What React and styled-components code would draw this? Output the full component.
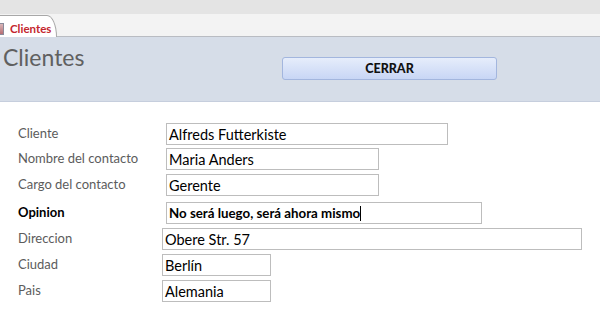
import styled, { createGlobalStyle } from "styled-components";

const GlobalStyle = createGlobalStyle`
  html, body {
    margin: 0;
    padding: 0;
    width: 600px;
    height: 324px;
    overflow: hidden;
    background: #ffffff;
    font-family: "Lato", "Open Sans", sans-serif;
  }
`;

const campos = [
  { id: 1, label: "Cliente", value: "Alfreds Futterkiste", width: 282, top: 21 },
  { id: 2, label: "Nombre del contacto", value: "Maria Anders", width: 213, top: 3 },
  { id: 3, label: "Cargo del contacto", value: "Gerente", width: 213, top: 4 },
  { id: 4, label: "Opinion", value: "No será luego, será ahora mismo", width: 316, top: 6, bold: true },
  { id: 5, label: "Direccion", value: "Obere Str. 57", width: 420, top: 4, indent: true },
  { id: 6, label: "Ciudad", value: "Berlín", width: 109, top: 4, indent: true },
  { id: 7, label: "Pais", value: "Alemania", width: 109, top: 4, indent: true },
];

const App = () => {
  return (
    <Page>
      <GlobalStyle />
      <TopBar />
      <TabStrip>
        <Tab>
          <TabIcon />
          <TabText>Clientes</TabText>
        </Tab>
      </TabStrip>

      <Header>
        <Title>Clientes</Title>
        <Button>CERRAR</Button>
      </Header>

      <Form>
        {campos.map((c) => (
          <Row key={c.id} $top={c.top}>
            <Label $bold={c.bold}>{c.label}</Label>
            <Field $width={c.width} $indent={c.indent} $bold={c.bold}>
              {c.value}
              {c.bold && <Caret />}
            </Field>
          </Row>
        ))}
      </Form>
    </Page>
  );
};

export default App;

// styled-components
const Page = styled.div`
  width: 600px;
  height: 324px;
  display: flex;
  flex-direction: column;
`;
const TopBar = styled.div`
  height: 14px;
  background: #e4e4e4;
`;
const TabStrip = styled.div`
  height: 22px;
  background: #f3f3f3;
  display: flex;
  align-items: flex-end;
  border-bottom: 1px solid #b9bcc2;
`;
const Tab = styled.div`
  width: 57px;
  height: 22px;
  margin-bottom: -1px;
  background: #ffffff;
  border-top: 1px solid #a8a8a8;
  border-right: 1px solid #a8a8a8;
  border-top-right-radius: 10px 22px;
  display: flex;
  align-items: center;
  gap: 6px;
  box-sizing: border-box;
`;
const TabIcon = styled.div`
  width: 3px;
  height: 10px;
  background: linear-gradient(#d8b6b8, #b86e74);
  border: 1px solid #8a8a9a;
  border-left: none;
  margin-top: 4px;
`;
const TabText = styled.span`
  font-size: 11.5px;
  font-weight: 700;
  color: #c4262e;
  margin-top: 4px;
`;
const Header = styled.div`
  height: 64px;
  background: #d6dde8;
  border-bottom: 1px solid #c6cedd;
  display: flex;
  align-items: flex-start;
`;
const Title = styled.div`
  margin: 6px 0 0 3px;
  font-size: 23px;
  color: #606060;
  line-height: 28px;
  width: 279px;
`;
const Button = styled.div`
  margin-top: 20px;
  width: 215px;
  height: 23px;
  box-sizing: border-box;
  border: 1px solid #a3b6de;
  border-radius: 3px;
  background: linear-gradient(#e6edfb, #c8d6f5);
  display: flex;
  align-items: center;
  justify-content: center;
  font-size: 12.5px;
  font-weight: 900;
  color: #111111;
`;
const Form = styled.div`
  display: flex;
  flex-direction: column;
  padding-left: 18px;
`;
const Row = styled.div`
  display: flex;
  align-items: center;
  margin-top: ${(p) => p.$top}px;
`;
const Label = styled.div`
  width: 148px;
  font-size: 13px;
  color: ${(p) => (p.$bold ? "#000000" : "#5c5c5c")};
  font-weight: ${(p) => (p.$bold ? 700 : 400)};
  margin-top: -2px;
`;
const Field = styled.div`
  width: ${(p) => p.$width}px;
  height: 22px;
  box-sizing: border-box;
  margin-left: ${(p) => (p.$indent ? -4 : 0)}px;
  border: 1px solid #bdbdbd;
  background: #ffffff;
  padding: 0 2px;
  display: flex;
  align-items: center;
  font-size: ${(p) => (p.$bold ? 13.3 : 14.5)}px;
  color: #000000;
  font-weight: ${(p) => (p.$bold ? 700 : 400)};
`;
const Caret = styled.span`
  width: 1px;
  height: 15px;
  background: #000000;
`;
